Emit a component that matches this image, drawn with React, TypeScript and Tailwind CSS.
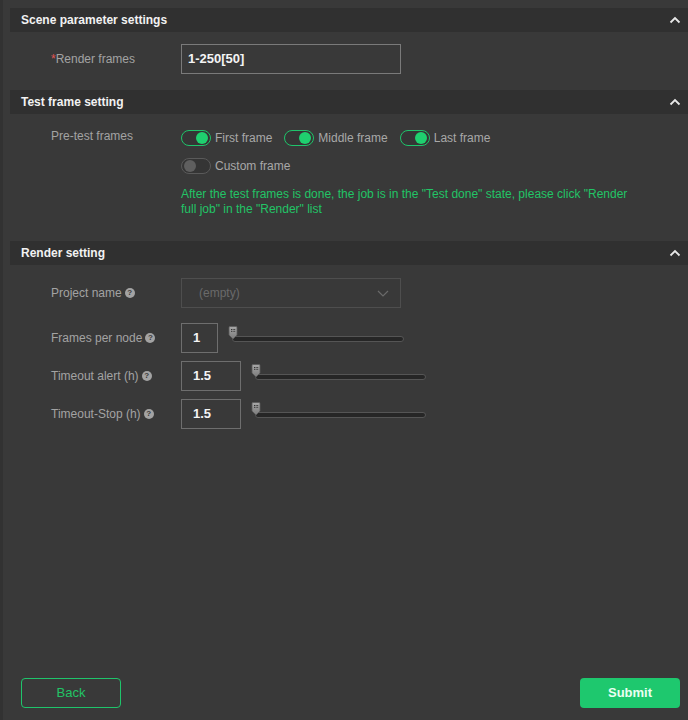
import React from "react";

const font = { fontFamily: '"Liberation Sans", Arial, sans-serif' };

function Chevron() {
  return (
    <svg width="12" height="8" viewBox="0 0 12 8" className="block">
      <path d="M1.5 6.5 L6 2 L10.5 6.5" fill="none" stroke="#e8e8e8" strokeWidth="1.8" />
    </svg>
  );
}

function Header({ title, className = "" }: { title: string; className?: string }) {
  return (
    <div className={`ml-[7px] h-6 bg-[#303030] flex items-center justify-between pl-[11px] pr-[7px] ${className}`}>
      <span className="text-[12px] font-bold text-[#f2f2f2]">{title}</span>
      <Chevron />
    </div>
  );
}

function Help() {
  return (
    <span className="inline-flex items-center justify-center w-[10px] h-[10px] rounded-full bg-[#a3a3a3] text-[#3a3a3a] text-[8px] font-bold leading-none ml-[3px]">
      ?
    </span>
  );
}

function Toggle({ on }: { on: boolean }) {
  return (
    <span
      className={`relative block shrink-0 w-[30px] h-[16px] rounded-full border ${
        on ? "border-[#1fc46b]" : "border-[#5a5a5a]"
      } bg-[#353535]`}
    >
      <span
        className={`absolute top-[1px] w-[12px] h-[12px] rounded-full ${
          on ? "right-[2px] bg-[#1fd06f]" : "left-[2px] bg-[#5f5f5f]"
        }`}
      />
    </span>
  );
}

function ToggleItem({ on, label, className = "" }: { on: boolean; label: string; className?: string }) {
  return (
    <div className={`flex items-center ${className}`}>
      <Toggle on={on} />
      <span className="ml-[4px] text-[12px] text-[#a8a8a8]">{label}</span>
    </div>
  );
}

function Slider({ width }: { width: number }) {
  return (
    <div className="relative h-[30px]" style={{ width }}>
      <div className="absolute left-[4px] right-0 top-[13px] h-[6px] rounded-full bg-[#262626] border border-[#555555]" />
      <svg className="absolute left-0 top-[3px]" width="10" height="14" viewBox="0 0 10 14">
        <defs>
          <linearGradient id="tg" x1="0" y1="0" x2="0" y2="1">
            <stop offset="0" stopColor="#a8a8a8" />
            <stop offset="1" stopColor="#7a7a7a" />
          </linearGradient>
        </defs>
        <path d="M1 1.5 Q1 0.5 2 0.5 H8 Q9 0.5 9 1.5 V9 L5 13 L1 9 Z" fill="url(#tg)" stroke="#5a5a5a" strokeWidth="0.8" />
        <rect x="3" y="3" width="1" height="1" fill="#333" />
        <rect x="4.6" y="3" width="1" height="1" fill="#333" />
        <rect x="6.2" y="3" width="1" height="1" fill="#333" />
        <rect x="3" y="4.8" width="1" height="1" fill="#333" />
        <rect x="4.6" y="4.8" width="1" height="1" fill="#333" />
        <rect x="6.2" y="4.8" width="1" height="1" fill="#333" />
      </svg>
    </div>
  );
}

function NumRow({
  label,
  value,
  inputW,
  sliderW,
  className = "",
}: {
  label: string;
  value: string;
  inputW: number;
  sliderW: number;
  className?: string;
}) {
  return (
    <div className={`flex items-center pl-[48px] ${className}`}>
      <div className="w-[130px] flex items-center text-[12px] text-[#a3a3a3]">
        {label}
        <Help />
      </div>
      <div
        className="h-[30px] border border-[#6e6e6e] flex items-center pl-[11px] text-[13px] font-bold text-[#f4f4f4]"
        style={{ width: inputW }}
      >
        {value}
      </div>
      <div className="ml-[10px]">
        <Slider width={sliderW} />
      </div>
    </div>
  );
}

export default function App() {
  return (
    <div
      className="w-[688px] h-[720px] bg-[#393939] border-l-[3px] border-[#323232] flex flex-col overflow-hidden"
      style={font}
    >
      <div className="pt-2">
        <Header title="Scene parameter settings" />
      </div>

      <div className="flex items-center pl-[48px] mt-[12px]">
        <div className="w-[130px] text-[12px] text-[#a3a3a3]">
          <span className="text-[#e05555]">*</span>Render frames
        </div>
        <div className="w-[220px] h-[30px] border border-[#7a7a7a] flex items-center pl-[6px] text-[13px] font-bold text-[#f4f4f4]">
          1-250[50]
        </div>
      </div>

      <Header title="Test frame setting" className="mt-[16px]" />

      <div className="flex pl-[48px] mt-[15px]">
        <div className="w-[130px] text-[12px] text-[#a3a3a3] -mt-[2px]">Pre-test frames</div>
        <div className="flex flex-col">
          <div className="flex items-center h-[18px]">
            <ToggleItem on label="First frame" />
            <ToggleItem on label="Middle frame" className="ml-[12px]" />
            <ToggleItem on label="Last frame" className="ml-[12px]" />
          </div>
          <div className="flex items-center h-[18px] mt-[10px]">
            <ToggleItem on={false} label="Custom frame" />
          </div>
          <div className="mt-[12px] w-[460px] text-[12px] leading-[15px] text-[#22c466]">
            After the test frames is done, the job is in the "Test done" state, please click "Render full job" in the "Render" list
          </div>
        </div>
      </div>

      <Header title="Render setting" className="mt-[24px]" />

      <div className="flex items-center pl-[48px] mt-[13px]">
        <div className="w-[130px] flex items-center text-[12px] text-[#a3a3a3]">
          Project name
          <Help />
        </div>
        <div className="w-[220px] h-[30px] border border-[#4e4e4e] flex items-center justify-between pl-[17px] pr-[11px] text-[12px] text-[#6a6a6a]">
          (empty)
          <svg width="12" height="7" viewBox="0 0 12 7">
            <path d="M1 1 L6 6 L11 1" fill="none" stroke="#6a6a6a" strokeWidth="1.2" />
          </svg>
        </div>
      </div>

      <NumRow label="Frames per node" value="1" inputW={37} sliderW={176} className="mt-[15px]" />
      <NumRow label="Timeout alert (h)" value="1.5" inputW={60} sliderW={175} className="mt-[8px]" />
      <NumRow label="Timeout-Stop (h)" value="1.5" inputW={60} sliderW={175} className="mt-[8px]" />

      <div className="flex-1" />

      <div className="flex justify-between pl-[18px] pr-[8px] pb-[12px]">
        <button className="w-[100px] h-[30px] rounded-[4px] border border-[#1fc46b] text-[#22c466] text-[13px]">
          Back
        </button>
        <button className="w-[100px] h-[30px] rounded-[4px] bg-[#1ec86e] text-[#eafff2] text-[13px] font-bold">
          Submit
        </button>
      </div>
    </div>
  );
}
